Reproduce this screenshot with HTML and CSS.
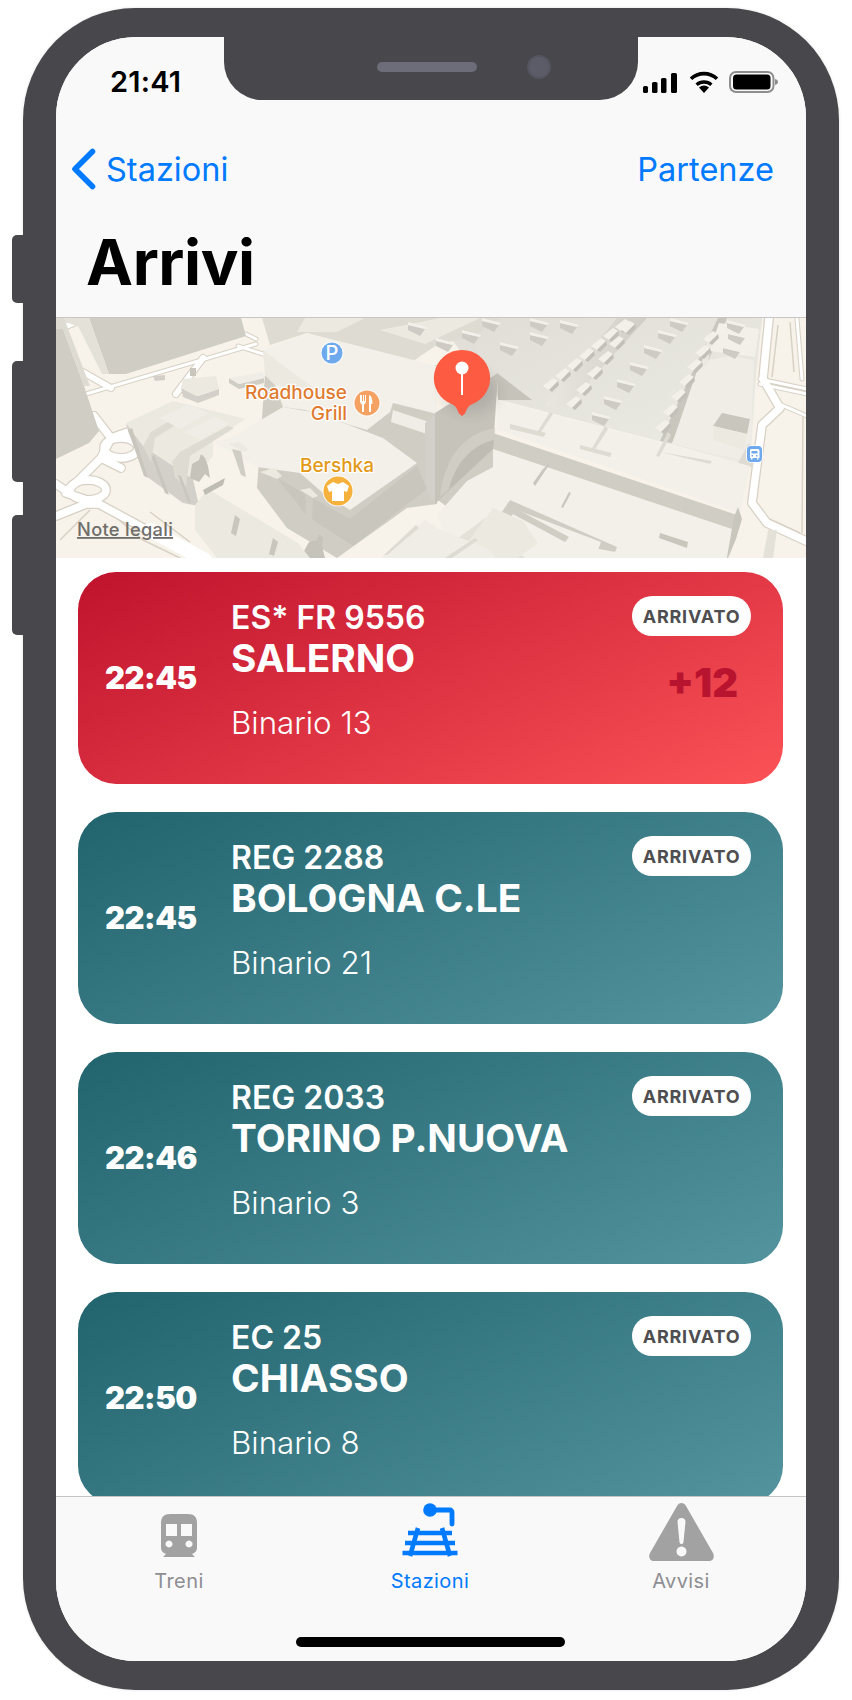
FILE: index.html
```html
<!DOCTYPE html>
<html lang="it">
<head>
<meta charset="utf-8">
<title>Arrivi</title>
<link rel="stylesheet" href="styles.css">
</head>
<body>
<div class="phone">
  <span class="side-btn side-btn-a"></span>
  <span class="side-btn side-btn-b"></span>
  <span class="side-btn side-btn-c"></span>
  <div class="notch"><span class="speaker"></span><span class="camera"></span></div>
  <main class="screen">
    <header class="head">
      <div class="status">
        <span class="clock">21:41</span>
        <div class="status-icons">
          <svg class="ic-signal" viewBox="0 0 34 20"><rect x="0" y="13" width="5" height="7" rx="1.6"/><rect x="9" y="9" width="5.5" height="11" rx="1.6"/><rect x="18" y="5" width="5.5" height="15" rx="1.6"/><rect x="28" y="0" width="6" height="20" rx="1.6"/></svg>
          <svg class="ic-wifi" viewBox="0 0 30 22"><path d="M15 22l-5-5.6a7.4 7.4 0 0 1 10 0z"/><path d="M7.6 13.8a11 11 0 0 1 14.8 0" fill="none" stroke="#000" stroke-width="3.4"/><path d="M2 7.8a19 19 0 0 1 26 0" fill="none" stroke="#000" stroke-width="3.6"/></svg>
          <svg class="ic-batt" viewBox="0 0 49 22"><rect x="1" y="1" width="43.5" height="20" rx="6" fill="none" stroke="#8e8e8e" stroke-width="2"/><rect x="4" y="3.5" width="37.5" height="15" rx="3.5"/><path d="M46 8c2 .4 3 1.600 3 3s-1 2.600-3 3z" fill="#8e8e8e"/></svg>
        </div>
      </div>
      <nav class="nav">
        <a class="back">
          <svg class="chev" viewBox="0 0 26 42"><path d="M22.500 3.500L5 21l17.500 17.500" fill="none" stroke="#007aff" stroke-width="5.600" stroke-linecap="round" stroke-linejoin="round"/></svg>
          <span>Stazioni</span>
        </a>
        <a class="forward">Partenze</a>
      </nav>
      <h1 class="title">Arrivi</h1>
    </header>

    <section class="map">
      <svg class="map-art" viewBox="56 318 750 240" preserveAspectRatio="none">
        <defs>
          <path id="roads-thin" fill="none" d="M86 394L256 344M238 346l25 8M246 334l10 5M760 384l47 10M760 379l47 10M777 403l30 13M797 319l5 60"/>
          <path id="roads-mid" fill="none" d="M81 371l30 17M203 358l-27 36M56 330l20-8"/>
          <path id="roads-wide" fill="none" d="M94 416l17 22-10 20-23 23-12 10-10-7M111 438l17-6M56 516l30-12 13 0M66 493l33 11 37 20 27 15 40 19M101 458l20 10"/>
          <path id="roads-right" fill="none" d="M769 318l-6 61 17 29-18 17-10 78 15 20 39 18"/>
          <g id="tooth"><path class="t-l" d="M0 8l10-8 5 3-9 9z"/><path class="t-d" d="M6 12l9-9 1 4-7 7z"/></g>
          <g id="dent"><path class="t-m" d="M0 3l17 4-5 7L0 8z"/><path class="t-l" d="M0 0l19 5-2 2L0 3z"/></g>
          <linearGradient id="shed" x1="0" y1="0" x2="1" y2="1"><stop offset="0" stop-color="#dfddd6"/><stop offset="1" stop-color="#ecebe4"/></linearGradient>
          <linearGradient id="valley" x1="1" y1="0" x2="0" y2="0"><stop offset="0" stop-color="#cfcdc5"/><stop offset="1" stop-color="#e9e7e0"/></linearGradient>
        </defs>
        <rect class="ground" x="56" y="318" width="750" height="240"/>
        <path class="road-line" d="M113 515l30 25 37 18M60 540l30-30M150 512l40 30M803 416l-1 117M763 516l37 17M778 325l-6 52M790 322l4 50"/>
        <use href="#roads-thin" class="road-edge thin"/>
        <use href="#roads-mid" class="road-edge mid"/>
        <use href="#roads-wide" class="road-edge wide"/>
        <ellipse class="road-edge wide" cx="121" cy="448" rx="17" ry="10" fill="none"/>
        <ellipse class="road-edge wide" cx="88" cy="490" rx="18" ry="10" fill="none"/>
        <use href="#roads-right" class="road-edge wide"/>
        <use href="#roads-thin" class="road-core thin"/>
        <use href="#roads-mid" class="road-core mid"/>
        <use href="#roads-wide" class="road-core wide"/>
        <ellipse class="road-core wide" cx="121" cy="448" rx="17" ry="10" fill="none"/>
        <ellipse class="road-core wide" cx="88" cy="490" rx="18" ry="10" fill="none"/>
        <use href="#roads-right" class="road-core wide"/>
        <path class="road-core big" d="M150 530l55 30"/>
        <path class="tone-5" d="M768 530h9l-4 28h-10z"/>

        <path class="tone-8" d="M89 318l20 56h17l120-38-5-18z"/>
        <path class="tone-5" d="M74 318h15l20 56h-7z"/>
        <path class="tone-5" d="M56 322l10-4h16l-2 9-12-4z"/>
        <path class="tone-8" d="M56 329h7l21 57 15 45-10 12-33 16z"/>
        <path class="tone-6" d="M56 318l8 0 26 68h-6l-21-57h-7z"/>
        <path class="tone-7" d="M153 376l12-1v5l-10 1z"/>
        <path class="tone-9" d="M190 368h6v8h-6z"/>
        <path class="tone-7" d="M181 388l2 9 15 6 21-8v-6l-21 7z"/>
        <path class="tone-3" d="M183 379l33-3 3 13-23 7-15-8z"/>
        <path class="tone-8" d="M229 378l10 6v5l-10-6zM239 384l25-6v5l-25 6z"/>
        <path class="tone-2" d="M229 378l34-6 1 6-25 6z"/>

        <!-- rail shed -->
        <path fill="url(#shed)" d="M437 318h325l-6 57-6 91-80-22-170-44-30-35z"/>
        <path class="tone-6" d="M262 318h238l-30 20-32 6-32 22-99-33-37 12z"/>
        <path class="tone-3" d="M305 318h60l-28 14h-40z"/>
        <path class="tone-3" d="M380 330l60-12h40l-55 26z"/>
        <path fill="url(#valley)" d="M617 318h30l-82 90-20-3z"/>
        <path class="tone-9" d="M718 318h9l-55 125-12-2z"/>
        <path class="tone-2" d="M672 444l28-82 30-6 24 4-4 102z"/>
        <path class="tone-1" d="M709 351l10-28 40 6-4 28z"/>
        <path class="tone-3" d="M701 366l7-30 5 2-6 28z"/>
        <path class="tone-9" d="M713 426l9-13 28 6-3 15z"/>
        <path class="tone-3" d="M713 426l34 8-3 16-30-10z"/>
        <path class="tone-6" d="M738 463l10-19 8 2-3 22z"/>
        <use href="#tooth" x="543" y="378"/><use href="#tooth" x="555" y="368"/><use href="#tooth" x="567" y="358"/><use href="#tooth" x="579" y="348"/><use href="#tooth" x="591" y="338"/><use href="#tooth" x="603" y="328"/><use href="#tooth" x="615" y="319"/>
        <use href="#tooth" x="566" y="396"/><use href="#tooth" x="576" y="382"/><use href="#tooth" x="587" y="366"/><use href="#tooth" x="598" y="351"/><use href="#tooth" x="609" y="336"/><use href="#tooth" x="620" y="321"/>
        <use href="#dent" x="592" y="412"/><use href="#dent" x="604" y="396"/><use href="#dent" x="617" y="379"/><use href="#dent" x="630" y="362"/><use href="#dent" x="644" y="345"/><use href="#dent" x="658" y="330"/><use href="#dent" x="670" y="318"/>
        <use href="#tooth" x="655" y="420"/><use href="#tooth" x="663" y="404"/><use href="#tooth" x="671" y="389"/><use href="#tooth" x="679" y="374"/><use href="#tooth" x="687" y="359"/><use href="#tooth" x="695" y="345"/><use href="#tooth" x="703" y="331"/>
        <use href="#dent" x="727" y="320"/><use href="#dent" x="728" y="331"/><use href="#dent" x="723" y="345"/>
        <use href="#dent" x="500" y="342"/><use href="#dent" x="530" y="332"/><use href="#dent" x="560" y="320"/><use href="#dent" x="462" y="330"/><use href="#dent" x="436" y="338"/><use href="#dent" x="408" y="322"/><use href="#dent" x="530" y="318"/><use href="#dent" x="482" y="318"/>

        <!-- front platform roofs -->
        <path class="tone-8" d="M493 433l247 83-3 14-53 28H500l-10-20-55-40z"/>
        <path class="tone-1" d="M497 400l253 66-10 47-243-84z"/>
        <path class="tone-6" d="M510 429l34 8 2-4-36-9zM580 449l30 8 2-4-32-8zM660 452l50 12 2-3z"/>
        <path class="tone-6" d="M550 412l-14 22 3 1 14-21zM605 426l-14 24 3 1 14-22zM668 432l-12 24 3 1 12-22z"/>
        <path class="tone-1" d="M437 515l30-34 26-14v-18l245 82-10 27H452z"/>
        <path class="tone-8" d="M510 500l107 47-2 5-125-24 7-9z"/>
        <path class="tone-1" d="M517 510l84 32-6 16h-71l-22-32z"/>
        <path class="tone-9" d="M660 533l28 9-1 6-28-10z"/>
        <path class="tone-9" d="M738 507l-4 10-8 46 10-24 6-20z"/>
        <path class="tone-9" d="M543 469l8-7-16 24-2-3z"/>
        <path class="tone-9" d="M569 492l-8 15 2 1 8-15z"/>
        <path class="tone-5" d="M440 558l5-10 40-30 40 40z"/>
        <path class="tone-3" d="M493 508l30 13 15 22-20 15h-46l-10-8z"/>
        <path class="tone-8" d="M509 505l60 32-4 5-60-32z"/>

        <!-- station tower and main roofs -->
        <path class="tone-8" d="M265 375l172-10v139l-30 4-70 50-50-30-30-40z"/>
        <path class="tone-10" d="M497 373l35 27h-34z"/>
        <path class="tone-1" d="M263 350l44-17 130 33v48l-44-11-3 9-23 18-17-5-20-7-25-8-22-3-8-22-10-10z"/>
        <path class="tone-3" d="M263 350l2 25 10 10 40 4-30-22z"/>
        <path class="tone-2" d="M393 410l36 12-2 12-36-12z"/>
        <path class="tone-7" d="M425 423l10-9v90l-10-14z"/>
        <path class="tone-10" d="M435 413l63-40-5 76-58 55z"/>
        <path class="tone-8" d="M440 497c5-42 25-64 55-69l-1 12c-24 6-39 25-45 49z"/>
        <path class="tone-11" d="M449 489c6-24 21-43 45-49l-1 9z"/>

        <path class="tone-9" d="M350 519l67-53 10 23-74 57-46-30-30-38z"/>
        <path class="tone-1" d="M213 442l17-4 53-31 34 6 66 25 34 25-67 47-27-17-23-20-43-6z"/>
        <path class="tone-8" d="M232 449l9 2 5 26-5-2zM264 478l8 2 5 27-5-4zM305 490l8 4-1 28-6-3z"/>
        <path class="tone-3" d="M228 444l12-2 9 8-4 2zM260 472l14-4 8 8-5 3zM300 490l10-2 8 8-5 2z"/>

        <path class="tone-7" d="M126 423l17 23 50 33 6 27-16-3-37-27-18-45z"/>
        <path class="tone-3" d="M126 423l47-22 73 18-33 20v17l-20 23-50-33z"/>
        <path class="tone-6" d="M143 446l8-14 40-24 8 2-44 28-4 24zM175 478l-3-16 8-10 48-26 6 2-44 28-4 30z"/>
        <path class="tone-9" d="M132 428l-4 2 16 46 4 2zM151 455l4 2 14 38-4-2zM178 475l3 1 10 27-3-1z"/>
        <path class="tone-2" d="M160 418l28-14 20 9-28 16zM184 432l30-15 16 6-30 17z"/>
        <path class="tone-10" d="M190 478l2-14 7-4 2-6 4 4 3 8 2 12-5-4-6 8z"/>
        <path class="tone-10" d="M300 558l9-16 8-2 2-6 4 4-1 8 3 12z"/>

        <path class="tone-3" d="M195 505l13-16 40 24 50 30 12 15h-93l-22-28z"/>
        <path class="tone-9" d="M235 515l-4 18 5 3 4-17zM273 538l-4 16 5 2 4-14z"/>
        <path class="tone-11" d="M203 490l22-12-2 7-18 10z"/>

        <path class="tone-2" d="M381 558l44-38 16 10 50 20 4 8z"/>
        <path class="tone-6" d="M384 555l32-30 3 3-32 27zM445 558l30-20 3 2-26 18z"/>

        <!-- labels -->
        <text class="lbl lbl-road" x="347" y="399" text-anchor="end">Roadhouse</text>
        <text class="lbl lbl-road" x="347" y="420" text-anchor="end">Grill</text>
        <text class="lbl lbl-ber" x="337" y="472" text-anchor="middle">Bershka</text>
        <text class="legal" x="77" y="536">Note legali</text>

        <circle class="poi-edge" cx="332" cy="353" r="11.500"/><circle class="poi-p" cx="332" cy="353" r="10.500"/>
        <text class="poi-pt" x="332" y="360" text-anchor="middle">P</text>
        <circle class="poi-edge" cx="367" cy="403" r="13.500"/><circle class="poi-f" cx="367" cy="403" r="12.500"/>
        <path class="poi-w" d="M360 395v6c0 2 1 3 2 3.500V412h2v-7.500c1-.5 2-1.500 2-3.500v-6h-1v6h-1v-6h-1v6h-1v-6zM369 395c3 1 3.500 5 3.500 9H371v8h-2z"/>
        <circle class="poi-edge" cx="338" cy="491" r="15.500"/><circle class="poi-s" cx="338" cy="491" r="14.500"/>
        <path class="poi-w" d="M333 482l5 2 5-2 6 4-2 6-3-1v10h-12v-10l-3 1-2-6z"/>
        <rect class="poi-edge" x="746" y="445" width="17" height="18" rx="5"/><rect class="poi-p" x="747" y="446" width="15" height="16" rx="4"/>
        <path class="poi-w" d="M751 449h7c1 0 1.500 1 1.500 2v7h-1v1.500h-1.500V458h-4.500v1.500H751V458h-1v-7c0-1 .5-2 1-2zm.5 2v2.500h6V451zm0 4v1.500h1.500V455zm4.500 0v1.500h1.500V455z"/>

        <ellipse class="pin-shadow" cx="470" cy="392" rx="28" ry="22"/>
        <path class="pin" d="M462 350a28 28 0 0 1 10 54.200c-3 1.200-5 4-7 9.300l-3 2.500-3-2.500c-2-5.300-4-8.100-7-9.300a28 28 0 0 1 10-54.200z"/>
        <circle class="poi-w" cx="462" cy="368" r="6.500"/><rect class="poi-w" x="461" y="372" width="2" height="23"/>
      </svg>
    </section>

    <section class="list">
      <article class="card card-late">
        <time class="card-time">22:45</time>
        <div class="card-info"><div class="code">ES* FR 9556</div><div class="dest">SALERNO</div><div class="track">Binario 13</div></div>
        <div class="card-side"><span class="pill">ARRIVATO</span><span class="delay">+12</span></div>
      </article>
      <article class="card">
        <time class="card-time">22:45</time>
        <div class="card-info"><div class="code">REG 2288</div><div class="dest">BOLOGNA C.LE</div><div class="track">Binario 21</div></div>
        <div class="card-side"><span class="pill">ARRIVATO</span></div>
      </article>
      <article class="card">
        <time class="card-time">22:46</time>
        <div class="card-info"><div class="code">REG 2033</div><div class="dest">TORINO P.NUOVA</div><div class="track">Binario 3</div></div>
        <div class="card-side"><span class="pill">ARRIVATO</span></div>
      </article>
      <article class="card">
        <time class="card-time">22:50</time>
        <div class="card-info"><div class="code">EC 25</div><div class="dest">CHIASSO</div><div class="track">Binario 8</div></div>
        <div class="card-side"><span class="pill">ARRIVATO</span></div>
      </article>
    </section>

    <footer class="tabs">
      <div class="tab">
        <div class="tab-icon"><svg class="ic-train" viewBox="0 0 36 43"><path fill-rule="evenodd" d="M9 0h18c6 0 9 3 9 9v25c0 3-2 5-5 6l3 3H2l3-3c-3-1-5-3-5-6V9c0-6 3-9 9-9zM5 10v12h11V10zM20 10v12h11V10zM8 26.500a3.500 3.500 0 1 0 .01 0zM28 26.500a3.500 3.500 0 1 0 .01 0z"/></svg></div>
        <span class="tab-label">Treni</span>
      </div>
      <div class="tab tab-on">
        <div class="tab-icon"><svg class="ic-station" viewBox="402 1505 56 54"><circle cx="430" cy="1512" r="6.800" fill="#007aff"/><path d="M430 1512h20a2 2 0 0 1 2 2v12" fill="none" stroke="#007aff" stroke-width="4.800" stroke-linecap="round"/><path d="M418 1530l-8 28M442 1530l8 28M408 1535h44M405 1545h50M402.500 1555h55" fill="none" stroke="#007aff" stroke-width="4.600"/></svg></div>
        <span class="tab-label">Stazioni</span>
      </div>
      <div class="tab">
        <div class="tab-icon"><svg class="ic-warn" viewBox="0 0 65 58"><path fill-rule="evenodd" d="M28 3c2-4 7-4 9 0l27 47c2 4 0 8-4 8H5c-4 0-6-4-4-8zM32.500 15c-2.500 0-4 1.500-4 4l2 20c.2 1.500 1 2 2 2s1.800-.5 2-2l2-20c0-2.500-1.500-4-4-4zM32.500 43.500a5 5 0 1 0 .01 0z"/></svg></div>
        <span class="tab-label">Avvisi</span>
      </div>
      <span class="home-bar"></span>
    </footer>
  </main>
</div>
</body>
</html>
```
FILE: styles.css
```css
* { box-sizing: border-box; margin: 0; padding: 0; }
html, body { background: #fff; }
body { width: 852px; height: 1700px; padding: 8px 0 0 23px; overflow: hidden; font-family: "Inter", "Liberation Sans", sans-serif; }

.phone { position: relative; width: 816px; height: 1682px; padding: 29px 33px 29px 33px; background: #48474c; border-radius: 112px; box-shadow: 0 0 3px rgba(0,0,0,.12); }
.side-btn { position: absolute; left: -11px; width: 12px; background: #48474c; border-radius: 5px 0 0 5px; }
.side-btn-a { top: 227px; height: 68px; }
.side-btn-b { top: 353px; height: 121px; }
.side-btn-c { top: 507px; height: 120px; }

.notch { position: absolute; z-index: 3; top: 29px; left: 201px; width: 414px; height: 63px; background: #48474c; border-radius: 0 0 38px 38px; }
.speaker { position: absolute; left: 153px; top: 25px; width: 100px; height: 10px; border-radius: 5px; background: #6d6d79; }
.camera { position: absolute; left: 303px; top: 18px; width: 24px; height: 24px; border-radius: 50%; background: #5c5c69; border: 2px solid #55555f; }

.screen { position: relative; display: flex; flex-direction: column; width: 750px; height: 1624px; border-radius: 80px; overflow: hidden; background: #fff; }

.head { flex: 0 0 281px; background: #f9f9f9; border-bottom: 1px solid #c6c6c6; }
.status { display: flex; justify-content: space-between; align-items: flex-start; height: 60px; padding: 0 28px 0 54px; }
.clock { margin-top: 27px; font-size: 29px; font-weight: 600; letter-spacing: .2px; color: #000; line-height: 36px; }
.status-icons { display: flex; align-items: center; padding-top: 35px; }
.ic-signal { width: 34px; height: 20px; margin-right: 12px; margin-top: 1px; }
.ic-wifi { width: 30px; height: 22px; margin-right: 10px; margin-top: -1px; }
.ic-batt { width: 49px; height: 22px; margin-top: -1px; }

.nav { display: flex; justify-content: space-between; align-items: center; height: 44px; margin-top: 50px; padding: 0 32px 0 14px; color: #007aff; font-size: 32.5px; }
.back { display: flex; align-items: center; }
.chev { width: 26px; height: 42px; margin-right: 10px; }
.title { margin-top: 32px; padding-left: 30px; font-size: 63px; font-weight: 700; line-height: 78px; color: #000; letter-spacing: -.4px; }

.map { flex: 0 0 240px; overflow: hidden; }
.map-art { display: block; width: 750px; height: 240px; }
.ground { fill: #f7f3ea; }
.road-line { fill: none; stroke: #d8d1c5; stroke-width: 1.500; }
.road-edge { stroke: #d8d1c5; stroke-linecap: round; stroke-linejoin: round; }
.road-core { stroke: #fff; stroke-linecap: round; stroke-linejoin: round; fill: none; }
.road-edge.thin { stroke-width: 5; }
.road-core.thin { stroke-width: 3; }
.road-edge.mid { stroke-width: 8; }
.road-core.mid { stroke-width: 6; }
.road-edge.wide { stroke-width: 10; }
.road-core.wide { stroke-width: 7.500; }
.road-core.big { stroke-width: 14; }
.tone-1 { fill: #f3f0e9; }
.tone-2 { fill: #f0ede6; }
.tone-3 { fill: #ece9e1; }
.tone-5 { fill: #e4e2d8; }
.tone-6 { fill: #dedbd3; }
.tone-7 { fill: #d3d0c9; }
.tone-8 { fill: #d0cdc5; }
.tone-9 { fill: #c9c6be; }
.tone-10 { fill: #c6c3bb; }
.tone-11 { fill: #bfbcb4; }
.t-l { fill: #f2f0e9; }
.t-m { fill: #cdcbc3; }
.t-d { fill: #c2c0b8; }
.lbl { font-size: 19px; font-weight: 500; paint-order: stroke; stroke: #fff; stroke-width: 2.500px; stroke-linejoin: round; }
.lbl-road { fill: #e07b30; }
.lbl-ber { fill: #e39a17; }
.legal { font-size: 18.3px; font-weight: 500; fill: #6f6e6b; text-decoration: underline; letter-spacing: .3px; }
.poi-edge { fill: #fff; fill-opacity: .8; }
.poi-p { fill: #6ea9ee; }
.poi-f { fill: #f5a162; }
.poi-s { fill: #f6b13c; }
.poi-w { fill: #fff; }
.poi-pt { font-size: 20px; font-weight: 500; fill: #fff; }
.pin { fill: #fe5b43; }
.pin-shadow { fill: #000; opacity: .1; filter: blur(7px); }

.list { flex: 1; min-height: 0; overflow: hidden; padding: 14px 23px 0 22px; display: flex; flex-direction: column; gap: 28px; background: #fff; }
.card { flex: 0 0 212px; display: flex; align-items: stretch; border-radius: 38px; color: #fff; background: linear-gradient(155deg, #22646e 0%, #53949f 100%); }
.card-late { background: linear-gradient(155deg, #bf132d 0%, #fb5257 100%); }
.card-time { flex: 0 0 153px; align-self: center; padding-left: 27px; font-size: 31px; font-weight: 900; line-height: 40px; letter-spacing: -.5px; }
.card-info { flex: 1; padding-top: 28px; }
.code { font-size: 32px; font-weight: 600; line-height: 36px; }
.dest { font-size: 38.8px; font-weight: 700; line-height: 44px; }
.track { margin-top: 25px; font-size: 31.3px; font-weight: 300; line-height: 36px; }
.card-side { display: flex; flex-direction: column; align-items: flex-end; padding: 24px 32px 0 0; }
.pill { display: flex; align-items: center; justify-content: center; width: 119px; height: 40px; border-radius: 20px; background: #fff; color: #4e4e50; font-size: 18px; font-weight: 700; letter-spacing: .8px; }
.delay { margin: 25px 13px 0 0; color: #b9142f; font-size: 40px; font-weight: 900; line-height: 44px; }

.tabs { position: relative; z-index: 2; flex: 0 0 165px; display: grid; grid-template-columns: 246px 256px 246px; background: #f9f9f9; border-top: 1px solid #c6c6c6; }
.tab { display: flex; flex-direction: column; align-items: center; color: #8e8e93; }
.tab-on { color: #007aff; }
.tab-icon { display: flex; align-items: flex-end; justify-content: center; height: 60px; }
.ic-train { width: 36px; height: 43px; fill: #a2a2a2; }
.ic-station { width: 56px; height: 54px; }
.ic-warn { width: 65px; height: 58px; fill: #a2a2a2; margin-bottom: -4px; }
.tab-label { margin-top: 12px; font-size: 20px; line-height: 24px; letter-spacing: .4px; }
.home-bar { position: absolute; left: 240px; bottom: 14px; width: 269px; height: 10px; border-radius: 5px; background: #000; }
```
